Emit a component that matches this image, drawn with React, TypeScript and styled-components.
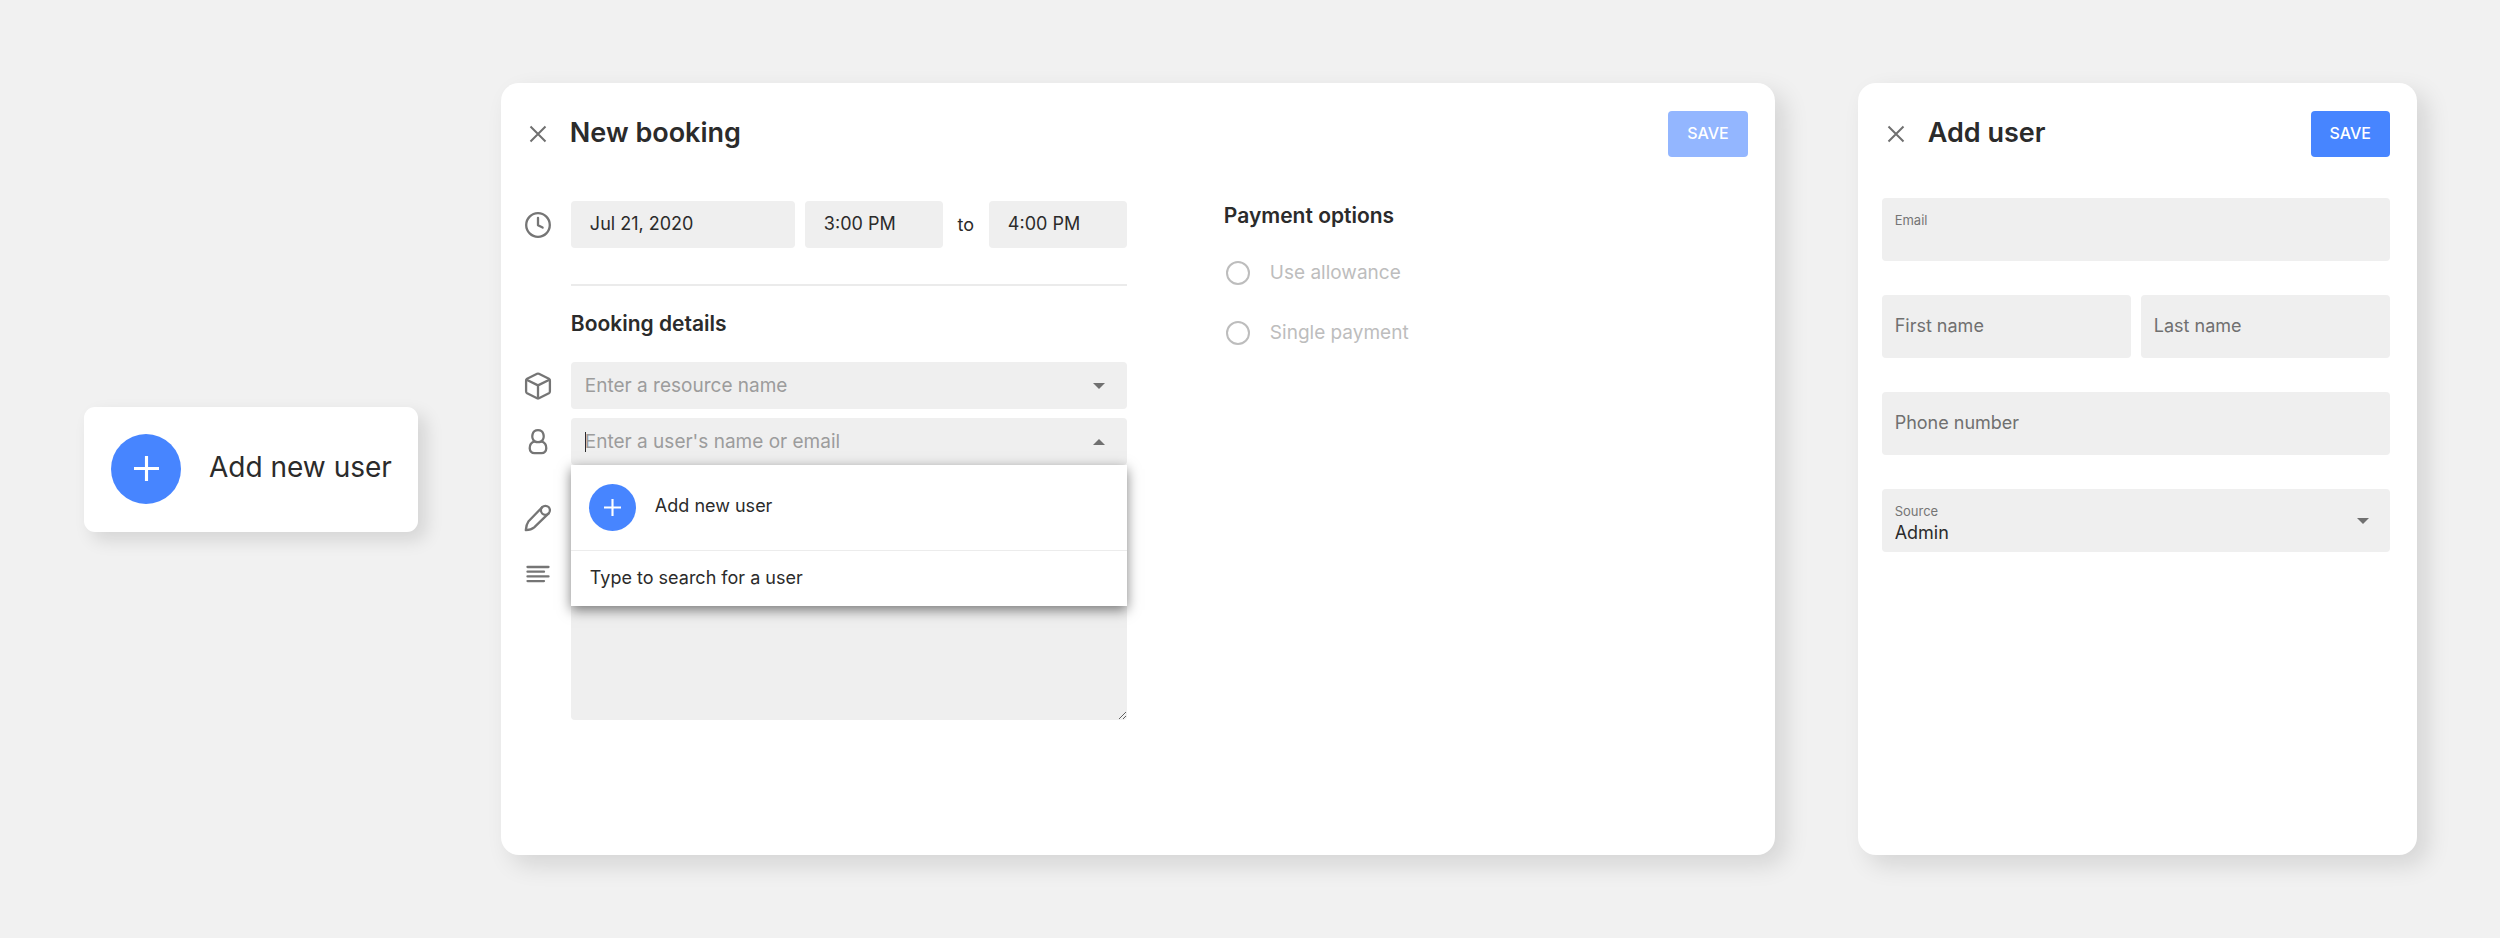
import React from "react";
import styled, { createGlobalStyle } from "styled-components";

const GlobalStyle = createGlobalStyle`
  *, *::before, *::after { box-sizing: border-box; }
  body {
    margin: 0;
    background: #f1f1f1;
    color: #2b2b2b;
    font-family: Inter, "Liberation Sans", sans-serif;
    font-size: 18px;
    line-height: 24px;
  }
  button, input, select, textarea { font: inherit; color: inherit; }
`;

const Page = styled.main`
  display: grid;
  grid-template-columns: auto minmax(0, 1273fr) minmax(0, 559fr);
  align-items: center;
  gap: 83px;
  min-height: 100vh;
  padding: 83px 83px 83px 84px;
`;

const Panel = styled.section`
  align-self: stretch;
  background: #fff;
  border-radius: 18px;
  box-shadow: 10px 10px 24px rgba(0, 0, 0, 0.12);
`;

const AddUserCard = styled.button`
  display: flex;
  align-items: center;
  gap: 28px;
  padding: 27px 26px 28px 27px;
  border: 0;
  border-radius: 11px;
  background: #fff;
  box-shadow: 8px 8px 18px rgba(0, 0, 0, 0.12);
  font-size: 28px;
  line-height: 36px;
  text-align: left;
  cursor: pointer;
`;

const PlusCircle = styled.span<{ $size: number }>`
  display: flex;
  flex: none;
  align-items: center;
  justify-content: center;
  width: ${(p) => p.$size}px;
  height: ${(p) => p.$size}px;
  border-radius: 50%;
  background: #4785ff;
  color: #fff;
`;

const ActionText = styled.span`
  padding-bottom: 4px;
`;

const PanelHeader = styled.header`
  display: flex;
  align-items: center;
  gap: 18px;
  height: 47px;
`;

const PanelTitle = styled.h1`
  flex: 1;
  margin: 0;
  padding-bottom: 2px;
  font-size: 27px;
  line-height: 36px;
  font-weight: 600;
`;

const CloseButton = styled.button`
  display: flex;
  flex: none;
  justify-content: center;
  width: 28px;
  padding: 0;
  border: 0;
  background: none;
  color: #707070;
  cursor: pointer;
`;

const SaveButton = styled.button`
  height: 46px;
  padding: 0 19px 2px;
  border: 0;
  border-radius: 4px;
  background: #4785ff;
  color: #fff;
  font-size: 16px;
  line-height: 20px;
  font-weight: 500;
  cursor: pointer;

  &:disabled {
    background: #93b6ff;
    cursor: default;
  }
`;

const BookingPanel = styled(Panel)`
  padding: 27px 27px 27px 23px;
`;

const UserPanel = styled(Panel)`
  padding: 27px 27px 27px 24px;
`;

const BookingBody = styled.div`
  display: grid;
  grid-template-columns: minmax(0, 603px) minmax(0, 1fr);
  column-gap: 97px;
  margin-top: 44px;
`;

const FormRow = styled.div<{ $gap?: number }>`
  display: grid;
  grid-template-columns: 28px minmax(0, 1fr);
  column-gap: 19px;
  margin-top: ${(p) => p.$gap ?? 0}px;
`;

const RowIcon = styled.span`
  display: flex;
  align-items: center;
  justify-content: center;
  height: 47px;
  color: #757575;
`;

const DateFields = styled.div`
  display: grid;
  grid-template-columns: 224fr 138fr 26px 138fr;
  column-gap: 10px;
  align-items: center;
  text-align: center;
`;

const Field = styled.input`
  display: block;
  width: 100%;
  min-width: 0;
  height: 47px;
  padding: 0 19px 2px;
  border: 0;
  border-radius: 4px;
  outline: 0;
  background: #efefef;
`;

const Divider = styled.hr`
  height: 2px;
  margin: 36px 0 25px 47px;
  border: 0;
  background: #ebebeb;
`;

const SectionTitle = styled.h2`
  margin: 0;
  font-size: 21px;
  line-height: 26px;
  font-weight: 600;
`;

const DetailsTitle = styled(SectionTitle)`
  margin: 0 0 25px 47px;
`;

const Combo = styled.div`
  position: relative;
`;

const ComboField = styled.label`
  display: flex;
  align-items: center;
  height: 47px;
  padding: 0 22px 0 14px;
  border-radius: 4px;
  background: #efefef;
  color: #707070;
`;

const ComboInput = styled.input`
  flex: 1;
  min-width: 0;
  padding: 0;
  border: 0;
  outline: 0;
  background: none;
  color: #2b2b2b;
  font-size: 19px;

  &::placeholder {
    color: #9c9c9c;
    opacity: 1;
  }
`;

const TextCursor = styled.span`
  width: 1px;
  height: 20px;
  margin-right: -1px;
  background: #2b2b2b;
`;

const Menu = styled.ul`
  position: absolute;
  z-index: 1;
  top: 100%;
  left: 0;
  right: 0;
  margin: 0;
  padding: 0;
  list-style: none;
  background: #fff;
  box-shadow: 0 4px 12px rgba(0, 0, 0, 0.5);
`;

const MenuAction = styled.button`
  display: flex;
  align-items: center;
  gap: 19px;
  width: 100%;
  height: 86px;
  padding: 0 18px;
  border: 0;
  border-bottom: 1px solid #ececec;
  background: none;
  text-align: left;
  cursor: pointer;
`;

const MenuHint = styled.li`
  padding: 15px 19px 16px;
`;

const Notes = styled.textarea`
  display: block;
  width: 100%;
  height: 170px;
  padding: 12px 19px;
  border: 0;
  border-radius: 4px;
  outline: 0;
  background: #efefef;
  resize: vertical;
`;

const PaymentOptions = styled.fieldset`
  min-width: 0;
  margin: 0;
  padding: 2px 0 0;
  border: 0;
`;

const RadioLabel = styled.label`
  display: flex;
  align-items: center;
  gap: 20px;
  padding: 0 2px;
  margin-top: 32px;
  color: #bdbdbd;
  font-size: 19px;

  & + & {
    margin-top: 36px;
  }
`;

const Radio = styled.input`
  appearance: none;
  width: 24px;
  height: 24px;
  margin: 0;
  border: 2px solid #bdbdbd;
  border-radius: 50%;
`;

const UserFields = styled.div`
  display: grid;
  grid-template-columns: 1fr 1fr;
  gap: 34px 10px;
  margin-top: 41px;
`;

const LabelledField = styled.label`
  display: flex;
  flex-direction: column;
  position: relative;
  grid-column: 1 / -1;
  height: 63px;
  padding: 14px 13px 6px;
  border-radius: 4px;
  background: #efefef;
`;

const SmallLabel = styled.span`
  color: #757575;
  font-size: 13px;
  line-height: 17px;
`;

const PlainField = styled(Field)<{ $wide?: boolean }>`
  grid-column: ${(p) => (p.$wide ? "1 / -1" : "auto")};
  height: 63px;
  padding: 0 13px 2px;

  &::placeholder {
    color: #707070;
    opacity: 1;
  }
`;

const InnerInput = styled.input`
  width: 100%;
  height: 24px;
  padding: 0;
  border: 0;
  outline: 0;
  background: none;
`;

const InnerSelect = styled.select`
  appearance: none;
  width: 100%;
  height: 26px;
  padding: 0;
  border: 0;
  outline: 0;
  background: none;
`;

const SelectCaret = styled.span`
  display: flex;
  align-items: center;
  position: absolute;
  top: 0;
  right: 21px;
  bottom: 0;
  color: #707070;
  pointer-events: none;
`;

const Plus = ({ size, stroke }: { size: number; stroke: number }) => (
  <svg width={size} height={size} viewBox="0 0 24 24" fill="none" stroke="currentColor" strokeWidth={stroke} aria-hidden="true">
    <path d="M12 0v24M0 12h24" />
  </svg>
);

const Cross = () => (
  <svg width="18" height="18" viewBox="0 0 18 18" fill="none" stroke="currentColor" strokeWidth="2" aria-hidden="true">
    <path d="M1.500 1.500l15 15M16.500 1.500l-15 15" />
  </svg>
);

const Caret = ({ up }: { up?: boolean }) => (
  <svg width="12" height="6" viewBox="0 0 12 6" fill="currentColor" aria-hidden="true">
    <path d={up ? "M0 6L6 0l6 6z" : "M0 0h12L6 6z"} />
  </svg>
);

const iconProps = {
  width: 28,
  height: 28,
  viewBox: "0 0 28 28",
  fill: "none",
  stroke: "currentColor",
  strokeWidth: 2.3,
  strokeLinecap: "round" as const,
  strokeLinejoin: "round" as const,
  "aria-hidden": true,
};

const ClockIcon = () => (
  <svg {...iconProps}>
    <circle cx="14" cy="14" r="11.8" />
    <path d="M14 6.800v7.400l4.600 2.400" />
  </svg>
);

const BoxIcon = () => (
  <svg {...iconProps}>
    <path d="M13.100 1.800a2 2 0 0 1 1.800 0l10 5a2 2 0 0 1 1 1.800v10.800a2 2 0 0 1-1 1.800l-10 5a2 2 0 0 1-1.800 0l-10-5a2 2 0 0 1-1-1.800V8.600a2 2 0 0 1 1-1.800z" />
    <path d="M2.600 7.700L14 13.400l11.400-5.700M14 13.400v12.800" />
  </svg>
);

const UserIcon = () => (
  <svg {...iconProps}>
    <path d="M10.600 13.400C6.400 9.500 8.200 2.200 14 2.200s7.600 7.300 3.400 11.200q-3.400 1.600-6.800 0z" />
    <path d="M10.600 13.400C3.700 15.600 4.500 25.200 10.500 25.200h7c6 0 6.800-9.600-.1-11.800" />
  </svg>
);

const PencilIcon = () => (
  <svg {...iconProps}>
    <path d="M18.200 3.200L4.600 17.200Q2.200 20.600 1.800 26.200 7.200 26 10.200 23.400L24.600 9.400" />
    <circle cx="21.400" cy="6.300" r="4.500" />
  </svg>
);

const LinesIcon = () => (
  <svg {...iconProps}>
    <path d="M3.500 7h21M3.500 11.700h16.500M3.500 16.400h21M3.500 21.100h16.500" />
  </svg>
);

export default function App() {
  return (
    <>
      <GlobalStyle />
      <Page>
        <AddUserCard type="button">
          <PlusCircle $size={70}>
            <Plus size={25} stroke={3} />
          </PlusCircle>
          <ActionText>Add new user</ActionText>
        </AddUserCard>

        <BookingPanel aria-label="New booking">
          <PanelHeader>
            <CloseButton type="button" aria-label="Close">
              <Cross />
            </CloseButton>
            <PanelTitle>New booking</PanelTitle>
            <SaveButton type="button" disabled>SAVE</SaveButton>
          </PanelHeader>
          <BookingBody>
            <div>
              <FormRow>
                <RowIcon><ClockIcon /></RowIcon>
                <DateFields>
                  <Field aria-label="Date" defaultValue="Jul 21, 2020" />
                  <Field aria-label="Start time" defaultValue="3:00 PM" />
                  <span>to</span>
                  <Field aria-label="End time" defaultValue="4:00 PM" />
                </DateFields>
              </FormRow>
              <Divider />
              <DetailsTitle>Booking details</DetailsTitle>
              <FormRow>
                <RowIcon><BoxIcon /></RowIcon>
                <ComboField>
                  <ComboInput aria-label="Resource" placeholder="Enter a resource name" />
                  <Caret />
                </ComboField>
              </FormRow>
              <FormRow $gap={9}>
                <RowIcon><UserIcon /></RowIcon>
                <Combo>
                  <ComboField>
                    <TextCursor />
                    <ComboInput aria-label="User" placeholder="Enter a user's name or email" />
                    <Caret up />
                  </ComboField>
                  <Menu>
                    <li>
                      <MenuAction type="button">
                        <PlusCircle $size={47}>
                          <Plus size={17} stroke={3} />
                        </PlusCircle>
                        <ActionText>Add new user</ActionText>
                      </MenuAction>
                    </li>
                    <MenuHint>Type to search for a user</MenuHint>
                  </Menu>
                </Combo>
              </FormRow>
              <FormRow $gap={29}>
                <RowIcon><PencilIcon /></RowIcon>
                <Field aria-label="Booking title" />
              </FormRow>
              <FormRow $gap={9}>
                <RowIcon><LinesIcon /></RowIcon>
                <Notes aria-label="Notes" />
              </FormRow>
            </div>
            <PaymentOptions aria-labelledby="payment-title">
              <SectionTitle id="payment-title">Payment options</SectionTitle>
              <RadioLabel>
                <Radio type="radio" name="payment" disabled />
                Use allowance
              </RadioLabel>
              <RadioLabel>
                <Radio type="radio" name="payment" disabled />
                Single payment
              </RadioLabel>
            </PaymentOptions>
          </BookingBody>
        </BookingPanel>

        <UserPanel aria-label="Add user">
          <PanelHeader>
            <CloseButton type="button" aria-label="Close">
              <Cross />
            </CloseButton>
            <PanelTitle>Add user</PanelTitle>
            <SaveButton type="button">SAVE</SaveButton>
          </PanelHeader>
          <UserFields>
            <LabelledField>
              <SmallLabel>Email</SmallLabel>
              <InnerInput type="email" />
            </LabelledField>
            <PlainField aria-label="First name" placeholder="First name" />
            <PlainField aria-label="Last name" placeholder="Last name" />
            <PlainField $wide type="tel" aria-label="Phone number" placeholder="Phone number" />
            <LabelledField>
              <SmallLabel>Source</SmallLabel>
              <InnerSelect defaultValue="Admin">
                <option>Admin</option>
              </InnerSelect>
              <SelectCaret><Caret /></SelectCaret>
            </LabelledField>
          </UserFields>
        </UserPanel>
      </Page>
    </>
  );
}
